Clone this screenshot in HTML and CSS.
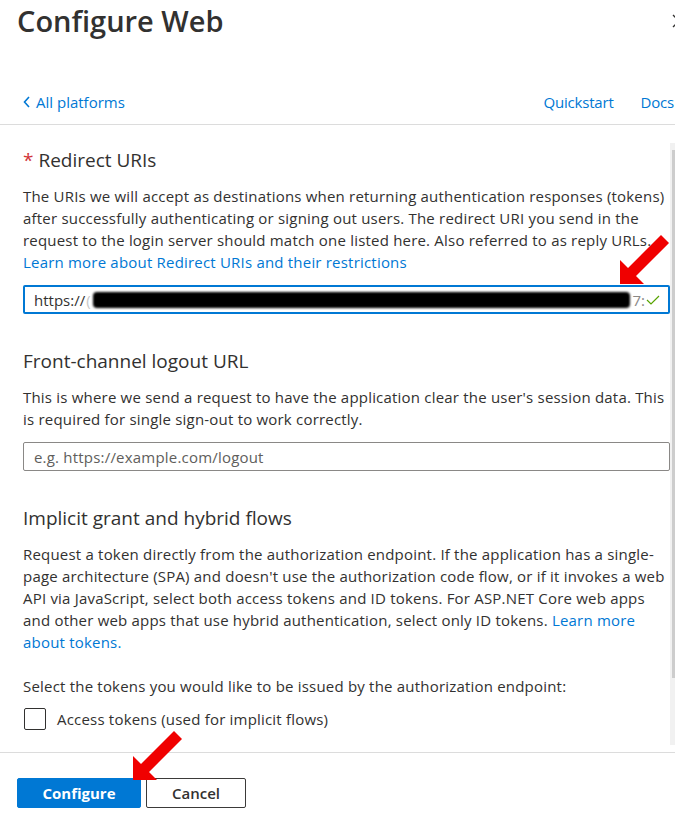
FILE: index.html
```html
<!DOCTYPE html>
<html lang="en">
<head>
<meta charset="utf-8">
<title>Configure Web</title>
<link rel="stylesheet" href="styles.css">
</head>
<body>
<div class="panel">
  <header class="head">
    <h1 class="title">Configure Web</h1>
    <svg class="close" width="14" height="14" viewBox="0 0 14 14"><path d="M1 1 L13 13 M13 1 L1 13" stroke="#323130" stroke-width="1.3" fill="none"/></svg>
  </header>
  <nav class="nav">
    <a class="back"><svg width="7" height="12" viewBox="0 0 7 12"><path d="M6 1 L1.5 6 L6 11" stroke="#0078d4" stroke-width="1.6" fill="none"/></svg>All platforms</a>
    <div class="navlinks"><a>Quickstart</a><a>Docs</a></div>
  </nav>
  <div class="body">
    <div class="content">
      <h2 class="sect first"><span class="req">*</span> Redirect URIs</h2>
      <p class="desc">The URIs we will accept as destinations when returning authentication responses (tokens)<br>after successfully authenticating or signing out users. The redirect URI you send in the<br>request to the login server should match one listed here. Also referred to as reply URLs.<br><a class="link">Learn more about Redirect URIs and their restrictions</a></p>
      <div class="input focus">
        <span class="val">https://</span><span class="faint">(</span><span class="redact"></span><span class="tail">7:</span>
        <svg class="check" width="14" height="10" viewBox="0 0 14 10"><path d="M1 5 L5 9 L13 1" stroke="#57a300" stroke-width="1.2" fill="none"/></svg>
      </div>

      <h2 class="sect">Front-channel logout URL</h2>
      <p class="desc">This is where we send a request to have the application clear the user's session data. This<br>is required for single sign-out to work correctly.</p>
      <div class="input"><span class="ph">e.g. https://example.com/logout</span></div>

      <h2 class="sect">Implicit grant and hybrid flows</h2>
      <p class="desc">Request a token directly from the authorization endpoint. If the application has a single-<br>page architecture (SPA) and doesn't use the authorization code flow, or if it invokes a web<br>API via JavaScript, select both access tokens and ID tokens. For ASP.NET Core web apps<br>and other web apps that use hybrid authentication, select only ID tokens. <a class="link">Learn more</a><br><a class="link">about tokens.</a></p>
      <p class="desc select">Select the tokens you would like to be issued by the authorization endpoint:</p>
      <label class="cb"><span class="box"></span>Access tokens (used for implicit flows)</label>
    </div>
    <div class="scroll"><div class="track"><div class="thumb"></div></div></div>
  </div>
  <footer class="foot">
    <button class="btn primary">Configure</button>
    <button class="btn">Cancel</button>
  </footer>

  <svg class="arrow a1" width="50" height="52" viewBox="0 0 50 52"><polygon points="0,50 0,26 8,34 41,1 49,9 16,42 24,50" fill="#f00000"/></svg>
  <svg class="arrow a2" width="50" height="52" viewBox="0 0 50 52"><polygon points="0,50 0,26 8,34 41,1 49,9 16,42 24,50" fill="#f00000"/></svg>
</div>
</body>
</html>
```

FILE: styles.css
```css
html, body {
  margin: 0;
  padding: 0;
  background: #fff;
  overflow: hidden;
}
body {
  font-family: "Open Sans", "Noto Sans", sans-serif;
  color: #323130;
  width: 675px;
  height: 818px;
}
.panel {
  position: relative;
  width: 690px;
  height: 818px;
  display: flex;
  flex-direction: column;
}
.head {
  display: flex;
  justify-content: space-between;
  align-items: flex-start;
  padding: 1px 4px 0 17px;
  height: 42px;
  box-sizing: border-box;
  flex: none;
}
.title {
  margin: 0;
  font-size: 29px;
  line-height: 40px;
  font-weight: 600;
  color: #323130;
}
.close {
  margin-top: 13px;
}
.nav {
  margin-top: 49px;
  display: flex;
  justify-content: space-between;
  align-items: center;
  padding: 0 16px 11px 23px;
  border-bottom: 1px solid #dcdcdc;
  font-size: 15px;
  line-height: 22px;
  color: #0078d4;
  flex: none;
}
.back {
  display: flex;
  align-items: center;
  gap: 6px;
}
.navlinks {
  display: flex;
  gap: 27px;
  letter-spacing: -0.2px;
}
.body {
  flex: 1;
  display: flex;
  overflow: hidden;
  min-height: 0;
}
.content {
  width: 647px;
  padding: 22px 0 0 23px;
  flex: none;
}
.sect {
  margin: 34px 0 0;
  font-size: 19px;
  font-weight: 400;
  line-height: 26px;
}
.sect.first { margin-top: 0; }
.req { color: #d13438; }
.desc {
  margin: 12px 0 0;
  font-size: 15px;
  line-height: 22px;
  letter-spacing: 0.2px;
  white-space: nowrap;
}
.link { color: #0078d4; }
.select { margin-top: 22px; }
.input {
  margin-top: 12px;
  height: 29px;
  box-sizing: border-box;
  border: 1px solid #8a8886;
  border-radius: 2px;
  display: flex;
  align-items: center;
  padding: 0 8px 0 10px;
  font-size: 15px;
}
.input.focus {
  border: 2px solid #0078d4;
  padding-left: 9px;
}
.val { color: #323130; }
.faint { color: #c8c8c8; margin-left: 1px; }
.redact {
  flex: 1;
  height: 16px;
  background: #000;
  border-radius: 4px;
  filter: blur(1.2px);
  margin: 0 2px 0 2px;
}
.tail { color: #8a8886; }
.check { margin-left: 1px; }
.ph { color: #605e5c; letter-spacing: 0.2px; }
.cb {
  display: flex;
  align-items: center;
  gap: 11px;
  margin-top: 11px;
  font-size: 15px;
  line-height: 22px;
  letter-spacing: 0.2px;
}
.box {
  width: 22px;
  height: 22px;
  box-sizing: border-box;
  border: 1px solid #323130;
  border-radius: 2px;
  margin-left: 1px;
}
.scroll {
  width: 20px;
  padding: 18px 0 7px;
  display: flex;
}
.track {
  flex: 1;
  background: #f1f1f1;
  padding: 7px 0 0 2px;
}
.thumb {
  height: 528px;
  background: #cdcdcd;
}
.foot {
  flex: none;
  height: 66px;
  box-sizing: border-box;
  border-top: 1px solid #dcdcdc;
  padding: 25px 0 0 17px;
  display: flex;
  gap: 5px;
  align-items: flex-start;
}
.btn {
  height: 30px;
  font-family: inherit;
  font-size: 15px;
  font-weight: 600;
  color: #323130;
  background: #fff;
  border: 1px solid #3b3a39;
  border-radius: 2px;
  width: 100px;
  padding: 0;
}
.primary {
  width: 124px;
  background: #0078d4;
  border-color: #0078d4;
  color: #fff;
  font-weight: 700;
}
.arrow { position: absolute; }
.a1 { left: 620px; top: 234px; }
.a2 { left: 133px; top: 730px; }
```
